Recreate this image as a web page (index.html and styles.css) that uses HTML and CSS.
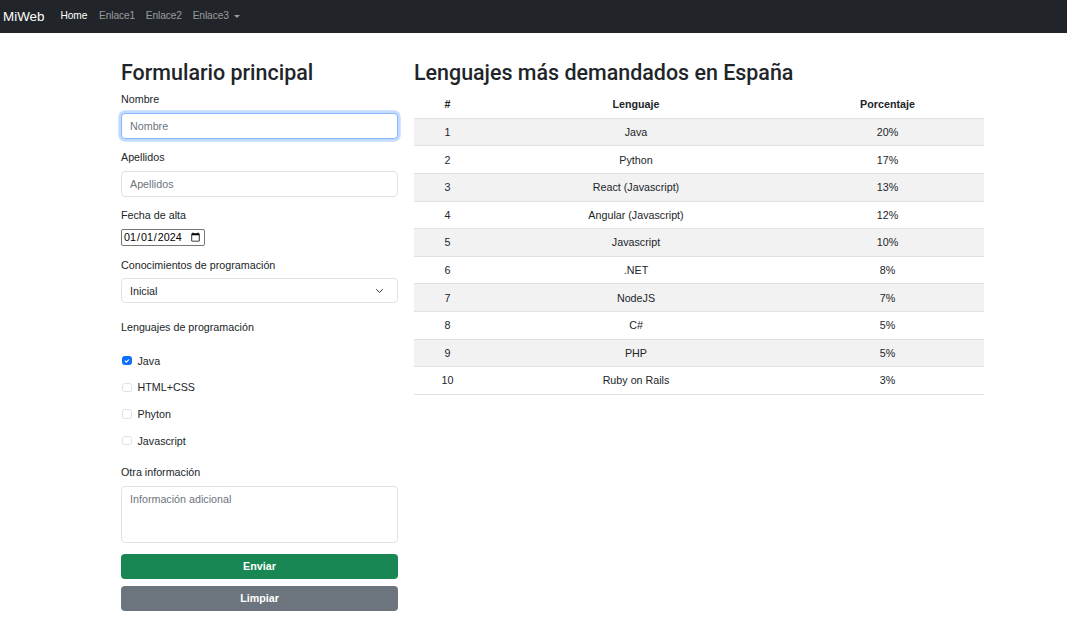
FILE: index.html
```html
<!DOCTYPE html>
<html lang="es">
<head>
<meta charset="utf-8">
<title>MiWeb</title>
<link rel="stylesheet" href="styles.css">
</head>
<body>
<nav class="navbar">
  <a class="brand" href="#">MiWeb</a>
  <ul class="nav">
    <li><a class="nav-link active" href="#">Home</a></li>
    <li><a class="nav-link" href="#">Enlace1</a></li>
    <li><a class="nav-link" href="#">Enlace2</a></li>
    <li><a class="nav-link dropdown" href="#">Enlace3<span class="caret"></span></a></li>
  </ul>
</nav>
<main class="main">
  <section class="col-form">
    <h2 class="title">Formulario principal</h2>
    <form>
      <div class="group">
        <label class="label" for="nombre">Nombre</label>
        <input class="control focused" id="nombre" type="text" placeholder="Nombre">
      </div>
      <div class="group">
        <label class="label" for="apellidos">Apellidos</label>
        <input class="control" id="apellidos" type="text" placeholder="Apellidos">
      </div>
      <div class="group">
        <label class="label" for="fecha">Fecha de alta</label>
        <input class="date" id="fecha" type="date" value="2024-01-01">
      </div>
      <div class="group">
        <label class="label" for="nivel">Conocimientos de programación</label>
        <div class="select-wrap">
          <select class="control select" id="nivel">
            <option>Inicial</option>
            <option>Medio</option>
            <option>Avanzado</option>
          </select>
          <svg class="chevron" viewBox="0 0 16 16" width="11" height="8"><path d="M2 5l6 6 6-6" fill="none" stroke="#343a40" stroke-width="2" stroke-linecap="round" stroke-linejoin="round"/></svg>
        </div>
      </div>
      <div class="group checks-title">
        <span class="label">Lenguajes de programación</span>
      </div>
      <div class="check"><span class="box checked"><svg viewBox="0 0 20 20" width="10" height="10"><path d="M6 10l3 3 6-6" fill="none" stroke="#fff" stroke-width="3" stroke-linecap="round" stroke-linejoin="round"/></svg></span><span>Java</span></div>
      <div class="check"><span class="box"></span><span>HTML+CSS</span></div>
      <div class="check"><span class="box"></span><span>Phyton</span></div>
      <div class="check"><span class="box"></span><span>Javascript</span></div>
      <div class="group other">
        <label class="label" for="info">Otra información</label>
        <textarea class="control area" id="info" placeholder="Información adicional"></textarea>
      </div>
      <div class="buttons">
        <button class="btn btn-green" type="submit">Enviar</button>
        <button class="btn btn-gray" type="reset">Limpiar</button>
      </div>
    </form>
  </section>
  <section class="col-table">
    <h2 class="title">Lenguajes más demandados en España</h2>
    <table class="table">
      <thead>
        <tr><th class="c-num">#</th><th class="c-lang">Lenguaje</th><th>Porcentaje</th></tr>
      </thead>
      <tbody>
        <tr><td>1</td><td>Java</td><td>20%</td></tr>
        <tr><td>2</td><td>Python</td><td>17%</td></tr>
        <tr><td>3</td><td>React (Javascript)</td><td>13%</td></tr>
        <tr><td>4</td><td>Angular (Javascript)</td><td>12%</td></tr>
        <tr><td>5</td><td>Javascript</td><td>10%</td></tr>
        <tr><td>6</td><td>.NET</td><td>8%</td></tr>
        <tr><td>7</td><td>NodeJS</td><td>7%</td></tr>
        <tr><td>8</td><td>C#</td><td>5%</td></tr>
        <tr><td>9</td><td>PHP</td><td>5%</td></tr>
        <tr><td>10</td><td>Ruby on Rails</td><td>3%</td></tr>
      </tbody>
    </table>
  </section>
</main>
</body>
</html>
```
FILE: styles.css
```css
* { box-sizing: border-box; }
html, body { margin: 0; padding: 0; background: #fff; }
body {
  font-family: "Liberation Sans", Arial, sans-serif;
  font-size: 10.72px;
  line-height: 16.08px;
  color: #212529;
}
a { text-decoration: none; }

.navbar {
  height: 33px;
  background: #212529;
  display: flex;
  align-items: center;
  padding: 0 3px;
}
.brand {
  color: #fff;
  font-size: 13.4px;
  line-height: 20px;
  margin-right: 10.7px;
}
.nav {
  list-style: none;
  margin: 0;
  padding: 0;
  display: flex;
}
.nav-link {
  display: flex;
  align-items: center;
  padding: 0 5.36px;
  font-size: 10.2px;
  letter-spacing: -0.1px;
  color: rgba(255,255,255,0.55);
}
.nav-link.active { color: #fff; margin-right: 1px; }
.caret {
  display: inline-block;
  margin-left: 5px;
  border-top: 3.5px solid rgba(255,255,255,0.55);
  border-left: 3.5px solid transparent;
  border-right: 3.5px solid transparent;
  margin-top: 1px;
}

.main {
  display: flex;
  gap: 16px;
  padding: 27px 0 0 121px;
  align-items: flex-start;
}
.col-form { width: 277px; }
.col-table { width: 570px; }

.title {
  margin: 0 0 5.36px;
  font-family: Roboto, "Liberation Sans", sans-serif;
  font-size: 21.44px;
  line-height: 25.7px;
  font-weight: 500;
}
.col-table .title { margin-bottom: 5px; }

.group { margin-bottom: 10.72px; }
.label {
  display: block;
  margin-bottom: 5.36px;
}
.control {
  display: block;
  width: 100%;
  height: 26px;
  padding: 4px 8px;
  font: inherit;
  color: #212529;
  background: #fff;
  border: 1px solid #dee2e6;
  border-radius: 4px;
  outline: none;
}
.control::placeholder { color: #6c757d; opacity: 1; }
.control.focused {
  border-color: #86b7fe;
  box-shadow: 0 0 0 2.68px rgba(13,110,253,0.25);
}
.date {
  font: inherit;
  font-size: 10.72px;
  height: 17px;
  width: 84px;
  padding: 0 1px;
  border: 1px solid #767676;
  border-radius: 2px;
  color: #000;
  background: #fff;
}
.select-wrap { position: relative; }
.select {
  appearance: none;
  -webkit-appearance: none;
  padding-right: 24px;
  height: 25px;
}
.chevron {
  position: absolute;
  right: 13px;
  top: 9px;
  pointer-events: none;
}
.checks-title { margin-top: 16px; }
.checks-title .label { margin-bottom: 0; }
.check {
  display: flex;
  align-items: center;
  gap: 6px;
  height: 16px;
  margin: 0 0 10.72px 1px;
}
.checks-title + .check { margin-top: 17.5px; }
.box {
  width: 9.5px;
  height: 9.5px;
  border: 1px solid #dee2e6;
  border-radius: 2.5px;
  background: #fff;
  display: flex;
  align-items: center;
  justify-content: center;
}
.box.checked { background: #0d6efd; border-color: #0d6efd; }
.box svg { width: 8px; height: 8px; }
.other { margin-top: 15.5px; }
.area { height: 57px; resize: none; }
.buttons {
  display: flex;
  flex-direction: column;
  gap: 6.5px;
  margin-top: 11px;
}
.btn {
  height: 25.5px;
  border: none;
  border-radius: 4px;
  color: #fff;
  font: inherit;
  font-weight: 700;
}
.btn-green { background: #198754; }
.btn-gray { background: #6c757d; }

.table {
  width: 100%;
  border-collapse: collapse;
}
.table th, .table td {
  text-align: center;
  padding: 0 5.36px;
  border-bottom: 1px solid #dee2e6;
  height: 27.6px;
}
.table th { font-weight: 700; }
.table tbody tr:nth-child(odd) td { background: #f2f2f2; }
.c-num { width: 67px; }
.c-lang { width: 310px; }
```
